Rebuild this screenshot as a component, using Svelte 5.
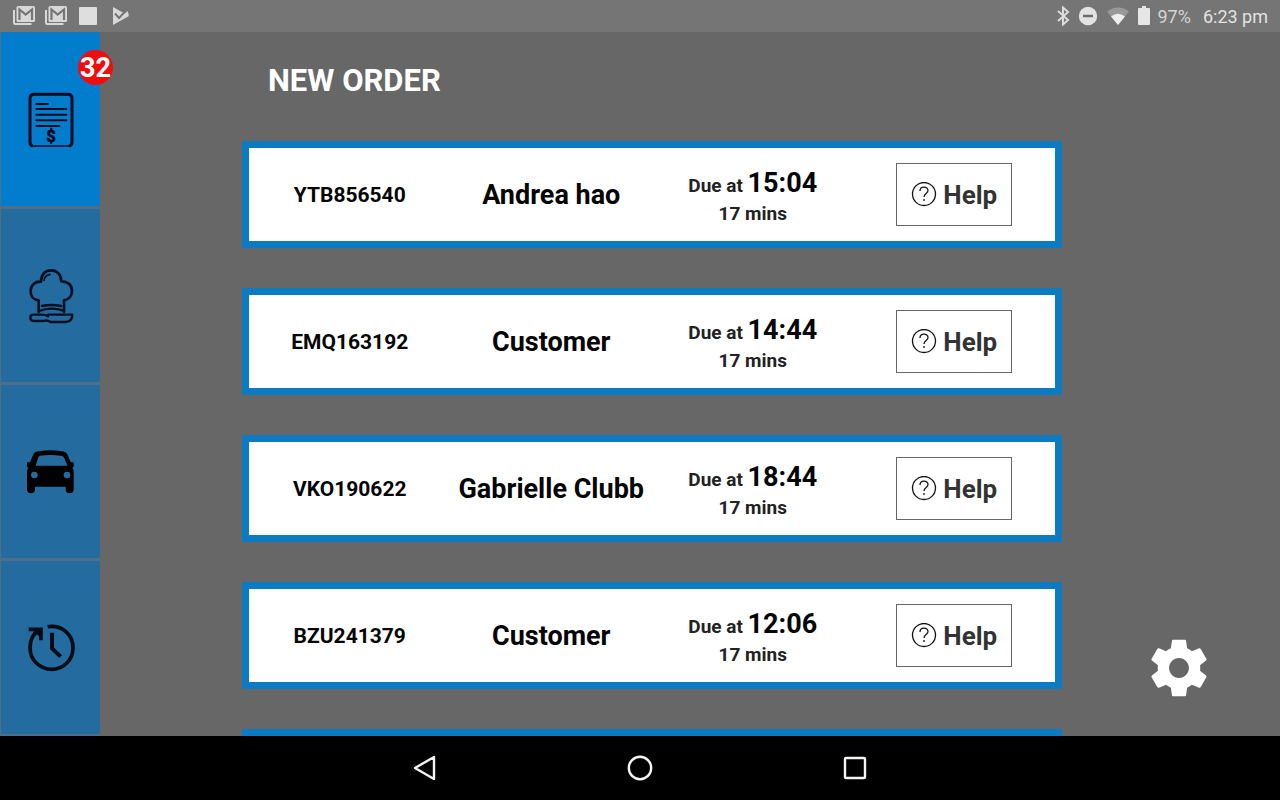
<script>
  const orders = [
    { id: 'YTB856540', name: 'Andrea hao', due: '15:04', mins: 17 },
    { id: 'EMQ163192', name: 'Customer', due: '14:44', mins: 17 },
    { id: 'VKO190622', name: 'Gabrielle Clubb', due: '18:44', mins: 17 },
    { id: 'BZU241379', name: 'Customer', due: '12:06', mins: 17 }
  ];
</script>

{#snippet mail()}
  <svg width="24" height="20" viewBox="0 0 24 20" fill="none" aria-hidden="true">
    <path d="M2 4v13q0 1 1 1H19.500" stroke="#d8d8d8" stroke-width="2" />
    <rect x="4.500" y="0" width="18.500" height="16" rx="1.500" fill="#d8d8d8" />
    <path d="M7.500 14V3.500L13.700 8.500 20 3.500V14" stroke="#757575" stroke-width="2.200" />
  </svg>
{/snippet}

<div class="screen">
  <header class="status">
    <div class="notes">
      {@render mail()}
      {@render mail()}
      <svg width="18" height="18" viewBox="0 0 18 18" aria-hidden="true"><rect width="18" height="18" rx="1" fill="#dedede" /></svg>
      <svg width="18" height="18" viewBox="0 0 18 18" aria-hidden="true">
        <path d="M1 0 17 9 1 18Z" fill="#d8d8d8" />
        <path d="M3 6.500l4 4.500 8-8.500" fill="none" stroke="#757575" stroke-width="2" />
        <path d="M11 8.500 15.500 4 17 8.500" fill="#d8d8d8" />
      </svg>
    </div>
    <div class="system">
      <svg width="14" height="20" viewBox="0 0 14 20" fill="none" stroke="#dcdcdc" stroke-width="2" aria-hidden="true">
        <path d="M2 5l10 9-5 4.500V1.500L12 6 2 15" />
      </svg>
      <svg width="20" height="20" viewBox="0 0 20 20" aria-hidden="true">
        <circle cx="10" cy="10" r="9.200" fill="#e2e2e2" /><path d="M5 10h10" stroke="#6d6d6d" stroke-width="2.500" />
      </svg>
      <svg width="24" height="20" viewBox="0 0 24 20" aria-hidden="true">
        <path d="M1 5.500Q12-2.500 23 5.500L12 19Z" fill="#999" />
        <path d="M5 10.500Q12 5 19 10.500L12 19Z" fill="#eee" />
      </svg>
      <svg class="battery" width="12" height="20" viewBox="0 0 12 20" fill="#e6e6e6" aria-hidden="true">
        <path d="M4 0h4v2h3q1 0 1 1v15q0 1-1 1H1q-1 0-1-1V3q0-1 1-1h3Z" />
      </svg>
      <span class="percent">97%</span>
      <time>6:23 pm</time>
    </div>
  </header>

  <div class="body">
    <nav class="tabs" aria-label="Orders">
      <button class="tab active" aria-label="New orders">
        <svg width="48" height="56" viewBox="79 36 144 168" fill="none" stroke="#050b1d" aria-hidden="true">
          <path d="M96 198q-8-2-8-12V56q0-13 13-13h100q13 0 13 13v130q0 10-8 12" stroke-width="9" />
          <path d="M92 198H211" stroke-width="4" />
          <path d="M107 72h35M107 87h90M107 104h90M107 121h90M107 138h69" stroke-width="6" stroke-linecap="round" />
          <text x="151" y="187" text-anchor="middle" fill="#050b1d" stroke="#050b1d" stroke-width="2">$</text>
        </svg>
        <span class="badge">32</span>
      </button>
      <button class="tab" aria-label="In the kitchen">
        <svg width="48" height="56" viewBox="80 53 144 168" fill="none" stroke="#030f20" stroke-width="8" stroke-linecap="round" stroke-linejoin="round" aria-hidden="true">
          <path d="M115 184v-34C96 148 90 134 91 120c1-17 15-27 31-26 0-22 13-34 30-34 18 0 31 13 31 33 18 0 32 10 32 28 0 17-11 27-24 29v34" />
          <path d="M131 90q2-15 18-18" stroke-width="5" />
          <path d="M125 167q28-6 57 0M117 182q37-14 74 0" stroke-width="7" />
          <path d="M99 193h24q12 0 20 5M143 193h73q1 20-20 22h-46q-9-7-20-3h-30q-10-1-10-10t10-9" stroke-width="7" />
        </svg>
      </button>
      <button class="tab" aria-label="Deliveries">
        <svg width="48" height="56" viewBox="82 222 144 168" aria-hidden="true">
          <path d="M118 244q34-6 68 0 13 1 17 9l10 24h9v14l-4 2q4 5 4 13v52q0 12-12 12t-12-12v-8h-92v8q0 12-12 12t-12-12v-52q0-8 4-13l-4-2v-14h9l10-24q4-9 17-9Z" fill="#000" />
          <path d="M121 257q31-4 62 0 8 0 11 7l9 23H108l7-23q2-6 6-7Z" fill="#246c9f" />
          <circle cx="104" cy="315" r="10" fill="#246c9f" /><circle cx="202" cy="315" r="10" fill="#246c9f" />
        </svg>
      </button>
      <button class="tab" aria-label="History">
        <svg width="48" height="56" viewBox="80 209 144 168" fill="none" stroke="#020b16" stroke-width="11" aria-hidden="true">
          <path d="M142 229c42-7 76 23 76 63 0 36-28 65-64 65s-65-29-65-65c0-25 12-44 30-54" />
          <path d="M85 237h37v33M106 240l16 16" stroke-width="11" />
          <path d="M155 247v47l26 25" stroke-width="12" />
        </svg>
      </button>
    </nav>

    <main>
      <h1>NEW ORDER</h1>
      <ul>
        {#each orders as order}
          <li>
            <span class="id">{order.id}</span>
            <span class="name">{order.name}</span>
            <span class="due">
              <span class="when">Due at <strong>{order.due}</strong></span>
              <span class="left">{order.mins} mins</span>
            </span>
            <button class="help">
              <svg width="26" height="26" viewBox="0 0 26 26" fill="none" stroke="#111" stroke-width="1.300" aria-hidden="true">
                <circle cx="13" cy="12" r="11.500" />
                <path d="M9 9c0-5 8-5 8-.500 0 3-4 3-4 6.500M13 17v2" />
              </svg>
              Help
            </button>
          </li>
        {/each}
        <li></li>
      </ul>
      <button class="settings" aria-label="Settings">
        <svg width="68" height="68" viewBox="0 0 24 24" fill="#fff" aria-hidden="true">
          <path d="M19.430 12.980c.04-.32.07-.64.07-.98s-.03-.66-.07-.98l2.110-1.650c.19-.15.24-.42.12-.64l-2-3.460c-.12-.22-.39-.3-.61-.22l-2.490 1c-.52-.4-1.080-.73-1.690-.98l-.38-2.650C14.460 2.180 14.250 2 14 2h-4c-.25 0-.46.18-.49.42l-.38 2.650c-.61.25-1.170.59-1.690.98l-2.490-1c-.23-.09-.49 0-.61.22l-2 3.460c-.13.22-.07.49.12.64l2.110 1.650c-.04.32-.07.65-.07.98s.03.66.07.98l-2.110 1.650c-.19.15-.24.42-.12.64l2 3.460c.12.22.39.3.61.22l2.490-1c.52.4 1.080.73 1.690.98l.38 2.650c.03.24.24.42.49.42h4c.25 0 .46-.18.49-.42l.38-2.650c.61-.25 1.170-.59 1.690-.98l2.490 1c.23.09.49 0 .61-.22l2-3.460c.12-.22.07-.49-.12-.64l-2.110-1.650zM12 15.500c-1.930 0-3.500-1.570-3.500-3.500s1.570-3.500 3.500-3.500 3.500 1.570 3.500 3.500-1.570 3.500-3.500 3.500z" />
        </svg>
      </button>
    </main>
  </div>

  <footer>
    <button aria-label="Back">
      <svg width="26" height="28" viewBox="0 0 26 28" fill="none" stroke="#f4f4f4" stroke-width="2.400" stroke-linejoin="round" aria-hidden="true"><path d="M22 3v22L3 14Z" /></svg>
    </button>
    <button aria-label="Home">
      <svg width="28" height="28" viewBox="0 0 28 28" fill="none" stroke="#f4f4f4" stroke-width="2.400" aria-hidden="true"><circle cx="14" cy="14" r="11.200" /></svg>
    </button>
    <button aria-label="Recent apps">
      <svg width="28" height="28" viewBox="0 0 28 28" fill="none" stroke="#f4f4f4" stroke-width="2.400" aria-hidden="true"><rect x="4" y="4" width="20" height="20" rx="1" /></svg>
    </button>
  </footer>
</div>

<style>
  .screen {
    display: flex;
    flex-direction: column;
    height: 100vh;
    background: #676767;
    font-family: Roboto, "Liberation Sans", sans-serif;
    overflow: hidden;
  }
  button {
    padding: 0;
    border: 0;
    background: none;
    font: inherit;
    color: inherit;
  }
  svg {
    display: block;
    flex: none;
  }
  .status {
    flex: none;
    display: flex;
    justify-content: space-between;
    align-items: center;
    height: 32px;
    padding: 0 12px;
    background: #757575;
    color: #d4d4d4;
    font-size: 18px;
  }
  .notes {
    display: flex;
    align-items: center;
    gap: 8px;
  }
  .notes svg:nth-child(3) {
    margin-left: 3px;
  }
  .notes svg:nth-child(4) {
    margin-left: 7px;
  }
  .system {
    display: flex;
    align-items: center;
    gap: 8px;
  }
  .system time {
    margin-left: 4px;
    color: #e2e2e2;
  }
  .body {
    flex: 1;
    display: flex;
    min-height: 0;
  }
  .tabs {
    flex: none;
    display: flex;
    flex-direction: column;
    width: 100px;
  }
  .tab {
    flex: 1;
    position: relative;
    display: flex;
    align-items: center;
    justify-content: center;
    border: 1px solid #4f6f88;
    border-bottom-width: 2px;
    border-right: 0;
    background: #246c9f;
  }
  .tab.active {
    border-top-color: #0f78bd;
    background: #027ccd;
  }
  .tab text {
    font-size: 50px;
    font-weight: 700;
  }
  .badge {
    position: absolute;
    top: 17px;
    right: -13px;
    width: 35px;
    height: 35px;
    border-radius: 50%;
    background: #f20d0d;
    color: #fff;
    font-size: 27px;
    font-weight: 700;
    line-height: 36px;
    text-align: center;
  }
  main {
    flex: 1;
    position: relative;
    padding: 31px 218px 0 142px;
    overflow: hidden;
  }
  h1 {
    margin: 0 26px 42px;
    color: #fff;
    font-size: 31px;
    font-weight: 700;
    line-height: 36px;
  }
  ul {
    display: flex;
    flex-direction: column;
    gap: 40px;
    margin: 0;
    padding: 0;
    list-style: none;
  }
  li {
    display: grid;
    grid-template-columns: repeat(4, 1fr);
    align-items: center;
    justify-items: center;
    min-height: 93px;
    border: 7px solid #0d7bc2;
    background: #fff;
    color: #050505;
    font-weight: 700;
    white-space: nowrap;
  }
  .id {
    font-size: 21px;
  }
  .name {
    font-size: 27px;
  }
  .due {
    display: flex;
    flex-direction: column;
    align-items: center;
    gap: 2px;
    padding-top: 4px;
    color: #222;
    font-size: 19px;
    line-height: 26px;
  }
  .due strong {
    color: #050505;
    font-size: 27px;
    font-weight: 700;
    line-height: 32px;
  }
  .help {
    display: flex;
    align-items: center;
    gap: 6px;
    height: 63px;
    padding: 0 14px;
    border: 1px solid #666;
    color: #333;
    font-size: 26px;
  }
  .settings {
    position: absolute;
    right: 67px;
    bottom: 34px;
  }
  footer {
    flex: none;
    display: flex;
    justify-content: center;
    height: 64px;
    background: #000;
  }
  footer button {
    display: flex;
    align-items: center;
    justify-content: center;
    width: 215px;
  }
</style>
